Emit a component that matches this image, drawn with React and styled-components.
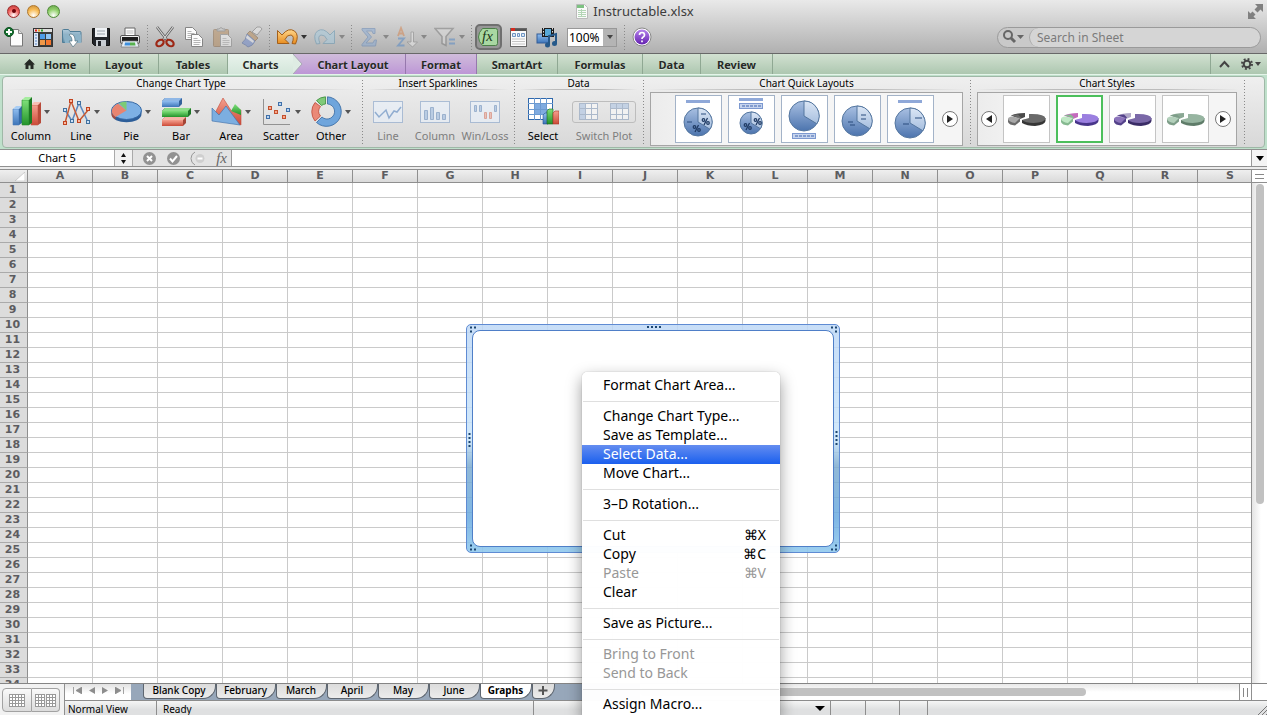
import React from 'react'
import styled, { createGlobalStyle, css } from 'styled-components'

const GlobalStyle = createGlobalStyle`
    * {
        box-sizing: border-box;
    }

    body {
        margin: 0;
        font-family: 'Noto Sans', 'Open Sans', sans-serif;
        font-size: 12px;
        color: #000;
        background: #fff;
    }

    button, input, select {
        font: inherit;
        color: inherit;
        margin: 0;
        padding: 0;
        border: 0;
        background: none;
    }

    svg {
        display: block;
        flex: none;
    }
`

const Window = styled.div`
    position: relative;
    display: flex;
    flex-direction: column;
    height: 100vh;
    overflow: hidden;
`

/* ---------- title bar and toolbar ---------- */

const Chrome = styled.header`
    flex: none;
    background: linear-gradient(#e9e9e9, #cfcfcf 45%, #b0b0b0);
    border-bottom: 1px solid #686868;
`

const TitleBar = styled.div`
    display: grid;
    grid-template-columns: 1fr auto 1fr;
    align-items: center;
    height: 22px;
    padding: 0 4px 0 7px;
`

const Lights = styled.div`
    display: flex;
    gap: 7px;
`

const Light = styled.button`
    width: 13px;
    height: 13px;
    border-radius: 50%;
    border: 1px solid ${p => p.$edge};
    background: radial-gradient(circle at 50% 85%, #fff 0, ${p => p.$color} 55%, ${p => p.$edge} 120%);
    display: flex;
    align-items: center;
    justify-content: center;

    i {
        width: 4px;
        height: 4px;
        border-radius: 50%;
        background: #6b0008;
    }
`

const Title = styled.h1`
    display: flex;
    align-items: center;
    gap: 5px;
    margin: 0;
    font-size: 13px;
    font-weight: 400;
    color: #3c3c3c;
`

const FullScreen = styled.button`
    justify-self: end;
`

const Toolbar = styled.div`
    display: flex;
    align-items: center;
    height: 31px;
    margin-left: -1px;
    padding: 0 6px 1px 0;
`

const ToolButton = styled.button`
    display: flex;
    align-items: center;
    justify-content: center;
    width: 29px;
    height: 26px;
    opacity: ${p => (p.$dim ? 0.5 : 1)};
`

const PressedTool = styled(ToolButton)`
    width: 27px;
    margin: 0 1px;
    border: 2px solid #6f6f6f;
    border-radius: 5px;
    background: #979797;
`

const ArrowButton = styled.button`
    width: 9px;
    height: 26px;
    color: ${p => (p.$dim ? '#888' : '#333')};
`

const Dotted = styled.span`
    flex: none;
    width: 6px;
    height: ${p => p.$h || 25}px;
    background: repeating-linear-gradient(#8a8a8a 0 1px, transparent 1px 3px) center / 1px 100% no-repeat;
`

const Zoom = styled.label`
    display: flex;
    align-items: center;
    width: 50px;
    height: 19px;
    margin: 0 4px 0 6px;
    border: 1px solid #989898;
    background: linear-gradient(to right, #fff 35px, #b4b4b4 35px);
    position: relative;

    select {
        appearance: none;
        width: 100%;
        padding-left: 1px;
        font-size: 12px;
        outline: none;
    }

    svg {
        position: absolute;
        right: 3px;
        top: 6px;
        color: #444;
        pointer-events: none;
    }
`

const Search = styled.div`
    display: flex;
    align-items: center;
    width: 264px;
    height: 21px;
    margin-left: auto;
    border: 1px solid #9a9a9a;
    border-radius: 11px;
    background: #c9c9c9;
    overflow: hidden;

    button {
        width: 31px;
        padding-left: 5px;
    }

    input {
        flex: 1;
        min-width: 0;
        height: 19px;
        padding-left: 7px;
        border-left: 1px solid #a9a9a9;
        border-radius: 10px;
        background: #d5d5d5;
        font-size: 12px;
        outline: none;
    }

    input::placeholder {
        color: #7b7b7b;
        opacity: 1;
    }
`

/* ---------- ribbon ---------- */

const Tabs = styled.nav`
    flex: none;
    display: flex;
    height: 20px;
    background: linear-gradient(#d2e1d1, #adc7b0);
`

const tabTone = {
    active: css`
        background: linear-gradient(#e9f3ec, #d3e6da);
        border-right: 0;
    `,
    purple: css`
        background: linear-gradient(#d0bcdb, #bd97d6);
        border-right-color: #9678ad;
    `,
}

const Tab = styled.button`
    position: relative;
    display: flex;
    align-items: center;
    justify-content: center;
    gap: 9px;
    flex: none;
    width: ${p => p.$w}px;
    padding-left: ${p => p.$pad || 0}px;
    border-right: 1px solid #8fa893;
    font-size: 11px;
    font-weight: 700;
    color: #262a26;
    text-shadow: 0 1px 0 rgba(255, 255, 255, 0.5);
    white-space: nowrap;
    ${p => tabTone[p.$tone]}
`

const TabPoint = styled.svg`
    position: absolute;
    left: 100%;
    top: 0;
    z-index: 1;
`

const TabTools = styled.div`
    display: flex;
    align-items: center;
    gap: 11px;
    width: 57px;
    margin-left: auto;
    padding-left: 8px;
    border-left: 1px solid #8fa893;
`

const Ribbon = styled.section`
    flex: none;
    height: 75px;
    padding: 1px 2px;
    background: #bfe0cb;
    border-top: 1px solid #e4f4e9;
`

const RibbonPanel = styled.div`
    display: flex;
    align-items: center;
    height: 72px;
    border: 1px solid #9fb8a7;
    border-radius: 4px;
    background: linear-gradient(#efefef, #d8d8d8);
`

const Group = styled.div`
    flex: none;
    display: flex;
    flex-direction: column;
    width: ${p => p.$w}px;
    height: 70px;
    padding: 0 3px;
`

const GroupTitle = styled.h2`
    margin: 0;
    height: 13px;
    font-size: 10px;
    line-height: 12px;
    font-weight: 400;
    text-align: center;
    border-bottom: 1px solid;
    border-image: linear-gradient(to right, transparent, #bbb 30%, #bbb 70%, transparent) 1;
`

const Items = styled.div`
    display: grid;
    grid-template-columns: ${p => p.$cols};
    flex: 1;
    align-items: end;
    padding: 0 0 4px;
`

const Item = styled.button`
    display: flex;
    flex-direction: column;
    align-items: center;
    font-size: 11px;
    line-height: 15px;
    white-space: nowrap;
    color: ${p => (p.$dim ? '#7e7e7e' : '#000')};

    span {
        display: flex;
        align-items: center;
        gap: 3px;
        height: 33px;
        color: #555;
    }
`

const SwitchFrame = styled.i`
    display: flex;
    width: 64px;
    height: 22px;
    border: 1px solid #bdbdbd;
    border-radius: 3px;
    align-items: center;
    justify-content: space-around;
`

const Gallery = styled.div`
    display: flex;
    align-items: center;
    gap: 6px;
    height: 54px;
    margin: 2px 1px 0;
    border: 1px solid #a5a5a5;
    background: linear-gradient(to right, #ececec, #f5f5f5 20%);
    padding: 0 4px 0 ${p => p.$start}px;
`

const Thumb = styled.button`
    width: 47px;
    height: 48px;
    border: ${p => (p.$selected ? '2px solid #4cbf5c' : `1px solid ${p.$edge}`)};
    background: #fff;
    display: flex;
    align-items: center;
    justify-content: center;
`

const Round = styled.button`
    width: 16px;
    height: 16px;
    border-radius: 50%;
    border: 1px solid #777;
    background: #fff;
    display: flex;
    align-items: center;
    justify-content: center;
    margin-left: ${p => p.$ml || 0}px;
`

/* ---------- formula bar ---------- */

const FormulaBar = styled.div`
    flex: none;
    display: flex;
    height: 18px;
    border-top: 1px solid #909090;
    border-bottom: 1px solid #909090;
    background: #e3e3e3;

    input {
        min-width: 0;
        background: #fff;
        outline: none;
    }
`

const NameBox = styled.input`
    width: 115px;
    font-size: 11px;
    line-height: 15px;
    padding-bottom: 1px;
    text-align: center;
    border-right: 1px solid #aaa;
`

const Stepper = styled.button`
    width: 18px;
    border-right: 1px solid #aaa;
    background: #f1f1f1;
    display: flex;
    align-items: center;
    justify-content: center;
`

const FormulaTools = styled.div`
    display: flex;
    align-items: center;
    justify-content: space-between;
    width: 99px;
    padding: 0 4px 0 10px;
    border-right: 1px solid #999;
`

const FxLabel = styled.button`
    font-family: 'Liberation Serif', serif;
    font-style: italic;
    font-size: 15px;
    line-height: 16px;
    color: #666;
`

const FormulaInput = styled.input`
    flex: 1;
`

const Expand = styled.button`
    width: 16px;
    border-left: 1px solid #999;
    background: #f4f4f4;
    display: flex;
    align-items: center;
    justify-content: center;
`

/* ---------- sheet ---------- */

const SheetArea = styled.main`
    flex: 1;
    min-height: 0;
    display: flex;
    border-top: 2px solid #ececec;
`

const SheetView = styled.div`
    flex: 1;
    min-width: 0;
    position: relative;
    overflow: hidden;
    border-right: 1px solid #909090;
`

const Grid = styled.table`
    table-layout: fixed;
    width: 1263px;
    border-collapse: separate;
    border-spacing: 0;

    th, td {
        padding: 0;
        height: 15px;
        width: 65px;
        border-right: 1px solid #cacaca;
        border-bottom: 1px solid #cacaca;
    }

    th {
        font-family: 'DejaVu Sans', sans-serif;
        font-size: 11px;
        line-height: 12px;
        font-weight: 700;
        color: #5c5c60;
        background: #dcdcdc;
        border-color: #8f8f8f;
    }

    th:first-child {
        width: 28px;
        padding-right: 2px;
    }

    tbody th {
        border-bottom-color: #aaa;
        line-height: 14px;
    }

    thead th {
        height: 14px;
        border-top: 1px solid #8f8f8f;
        background: linear-gradient(#efefef, #dadada);
    }
`

const CornerMark = styled.svg`
    margin-left: auto;
`

const VScroll = styled.div`
    width: 15px;
    background: linear-gradient(to right, #e4e4e4, #fff 60%);

    span {
        display: flex;
        align-items: center;
        justify-content: center;
        height: 14px;
        border-top: 1px solid #8f8f8f;
        border-bottom: 1px solid #8f8f8f;
        background: #fff;
    }

    i {
        display: block;
        width: 8px;
        height: 320px;
        margin: 1px 0 0 4px;
        border-radius: 4px;
        background: #c1c1c1;
    }
`

const ChartFrame = styled.div`
    position: absolute;
    left: 466px;
    top: 155px;
    width: 374px;
    height: 229px;
    padding: 5px;
    border: 1px solid #5f8bd3;
    border-radius: 5px;
    background: linear-gradient(
        rgba(190, 216, 246, 0.85),
        rgba(200, 228, 250, 0.85) 50%,
        rgba(125, 172, 208, 0.85) 62%,
        rgba(105, 170, 224, 0.85) 85%,
        rgba(146, 202, 238, 0.9)
    );
`

const ChartArea = styled.div`
    height: 100%;
    border: 1px solid #4f7fc8;
    border-radius: 8px;
    background: #fff;
`

const Handle = styled.svg`
    position: absolute;
    ${p => p.$place}
`

/* ---------- bottom bar ---------- */

const Bottom = styled.footer`
    flex: none;
    display: flex;
    height: 32px;
    border-top: 1px solid #858585;
    background: #f2f2f2;
`

const ViewSwitch = styled.div`
    display: flex;
    width: 65px;
    padding: 4px 4px 3px 2px;
    border-right: 1px solid #909090;

    button {
        flex: 1;
        display: flex;
        align-items: center;
        justify-content: center;
        border: 1px solid #a2a2a2;
        background: linear-gradient(#fafafa, #dcdcdc);
    }

    button:first-child {
        border-radius: 4px 0 0 4px;
    }

    button:last-child {
        border-radius: 0 4px 4px 0;
        border-left: 0;
    }
`

const BottomMain = styled.div`
    flex: 1;
    min-width: 0;
`

const TabStrip = styled.div`
    display: flex;
    height: 17px;
    border-bottom: 1px solid #8c8c8c;
`

const SheetTabs = styled.div`
    display: flex;
    align-items: flex-start;
    width: 575px;
    background: #97a7ba;
`

const SheetNav = styled.div`
    display: flex;
    align-items: center;
    justify-content: space-around;
    width: 66px;
    height: 16px;
    margin-right: 12px;
    padding: 0 4px 4px 4px;
    background: linear-gradient(#e2e2e2, #fff 60%);
`

const SheetTab = styled.button`
    width: ${p => p.$w}px;
    height: 15px;
    padding: 0 1px 2px 0;
    border: 1px solid #5e6670;
    border-top: 0;
    border-radius: 0 0 13px 4px;
    background: ${p => (p.$active ? '#fff' : 'linear-gradient(#dcdcdc, #ececec)')};
    font-size: 10px;
    line-height: 12px;
    font-weight: ${p => (p.$active ? 700 : 500)};
    white-space: nowrap;
`

const HScroll = styled.div`
    flex: 1;
    display: flex;
    align-items: center;
    background: linear-gradient(#e9e9e9, #fff 50%);

    i {
        width: 446px;
        height: 8px;
        border-radius: 4px;
        background: #c1c1c1;
    }

    span {
        display: flex;
        align-items: center;
        justify-content: center;
        width: 13px;
        height: 16px;
        margin-left: auto;
        border: 1px solid #909090;
        border-width: 0 1px;
        background: #fff;
    }
`

const StripEnd = styled.div`
    width: 15px;
    background: #fff;
`

const Status = styled.div`
    display: flex;
    height: 14px;
    background: linear-gradient(#f5f5f5, #dfe0e1 60%);
`

const StatusCell = styled.div`
    display: flex;
    align-items: center;
    justify-content: ${p => (p.$end ? 'flex-end' : 'flex-start')};
    width: ${p => p.$w}px;
    padding: 1px 5px 0 ${p => p.$pad || 3}px;
    border-right: 1px solid #8d8d8d;
    font-size: 10px;
    line-height: 14px;
    white-space: nowrap;
`

const Grip = styled.svg`
    margin-left: auto;
`

/* ---------- context menu ---------- */

const Menu = styled.div`
    position: absolute;
    left: 582px;
    top: 372px;
    z-index: 5;
    width: 198px;
    padding: 4px 0 5px;
    border-radius: 5px;
    background: rgba(255, 255, 255, 0.98);
    box-shadow: 0 0 1px rgba(0, 0, 0, 0.4), 0 6px 16px rgba(0, 0, 0, 0.4);
`

const MenuItem = styled.button`
    display: flex;
    justify-content: space-between;
    width: 100%;
    height: 19px;
    padding: 0 14px 0 21px;
    font-size: 14px;
    line-height: 17px;
    color: ${p => (p.$on ? '#fff' : p.$dim ? '#979797' : '#000')};
    background: ${p => (p.$on ? 'linear-gradient(#648df0, #1a5fee)' : 'none')};
`

const MenuLine = styled.hr`
    height: 1px;
    margin: 6px 1px 5px;
    border: 0;
    background: #dfdfdf;
`

/* ---------- drawings ---------- */

const Defs = () => (
    <svg width="0" height="0" style={{ position: 'absolute' }}>
        <defs>
            {[
                ['blue', '#8fbdf0', '#3c74b8'],
                ['green', '#7fe07a', '#23932b'],
                ['red', '#f5a08f', '#cc4a37'],
                ['steel', '#b0cbdc', '#5d8aa5'],
                ['orange', '#ffd68a', '#e88b1c'],
                ['pie', '#a9c0e2', '#4c74ae'],
                ['piel', '#dbe6f5', '#a7bfdf'],
                ['grey', '#fafafa', '#b9b9b9'],
                ['violet', '#b583ec', '#6420b0'],
            ].map(([id, a, b]) => (
                <linearGradient key={id} id={id} x1="0" y1="0" x2="0" y2="1">
                    <stop offset="0" stopColor={a} />
                    <stop offset="1" stopColor={b} />
                </linearGradient>
            ))}
        </defs>
    </svg>
)

const Svg = ({ w = 22, h = 22, children, ...rest }) => (
    <svg width={w} height={h} viewBox={`0 0 ${w} ${h}`} fill="none" aria-hidden="true" {...rest}>
        {children}
    </svg>
)

const Down = ({ w = 6, h = 4 }) => (
    <Svg w={w} h={h}><path d={`M0 0h${w}L${w / 2} ${h}z`} fill="currentColor" /></Svg>
)

const NewIcon = () => (
    <Svg>
        <path d="M7.500 3.500h8l4 4v12.500h-12z" fill="#fcfcfc" stroke="#777" />
        <path d="M15.500 3.500v4h4" fill="#ddd" stroke="#888" />
        <circle cx="6" cy="6" r="4.500" fill="#15702f" stroke="#0a4f1d" />
        <path d="M6 3v6M3 6h6" stroke="#fff" strokeWidth="2" />
    </Svg>
)

const GalleryIcon = () => (
    <Svg>
        <rect x="1.500" y="2.500" width="19" height="18" fill="#3c3c3c" stroke="#333" />
        <rect x="2" y="3" width="18" height="3" fill="#ddd" />
        <path d="M3 4.500h2" stroke="#e02020" strokeWidth="2" />
        <path d="M6 4.500h2" stroke="#e8a020" strokeWidth="2" />
        <path d="M9 4.500h2" stroke="#30a030" strokeWidth="2" />
        <rect x="2" y="7" width="4" height="13" fill="#dfe9f6" />
        <path d="M3 9h2M3 12h2M3 15h2M3 18h2" stroke="#5580c0" />
        <rect x="8" y="8" width="5" height="5" fill="#4d9be8" />
        <rect x="14" y="8" width="5" height="5" fill="#8fc4f5" />
        <rect x="8" y="14" width="5" height="5" fill="#f09848" />
        <rect x="14" y="14" width="5" height="5" fill="#f4762e" />
    </Svg>
)

const OpenIcon = () => (
    <Svg>
        <path d="M1.500 4.500q0-1 1-1h5l1.500 2h10q1 0 1 1v10h-18.500z" fill="url(#steel)" stroke="#4f7d97" />
        <path d="M2 8.500h18v8.500h-16z" fill="#8db3c8" />
        <path d="M9 8c4 0 5 3 5 7h3l-5 6-4-6h3c0-3-1-5-3-6z" fill="#fff" stroke="#51717f" strokeWidth=".7" />
    </Svg>
)

const SaveIcon = () => (
    <Svg>
        <path d="M2.500 2.500h17v17h-15l-2-2z" fill="#22252a" stroke="#111" />
        <rect x="5" y="2" width="12" height="9" fill="#eef1f4" />
        <path d="M7 5h8M7 8h8" stroke="#9aa3ad" />
        <rect x="6" y="14" width="10" height="6" fill="#c9ced4" />
        <rect x="8" y="15" width="3" height="5" fill="#22252a" />
    </Svg>
)

const PrintIcon = () => (
    <Svg>
        <path d="M6 10V2h10v8z" fill="#fff" stroke="#666" />
        <path d="M7.500 5h7M7.500 7h7" stroke="#bbb" />
        <rect x="1.500" y="9.500" width="19" height="8" rx="1.500" fill="url(#grey)" stroke="#555" />
        <rect x="3" y="11" width="16" height="4" fill="#1d1d1d" />
        <path d="M4 15h14l2 6H2z" fill="#e6eef5" stroke="#777" strokeWidth=".7" />
        <path d="M6 16.500h5v3H5.500z" fill="#3f8fdb" />
        <path d="M11 16.500h5l.5 3H11z" fill="#56b04e" />
    </Svg>
)

const CutIcon = () => (
    <Svg>
        <path d="M3 1l10 13M19 1L9 14" stroke="#5a5a5a" strokeWidth="2.600" />
        <path d="M3 1l10 13M19 1L9 14" stroke="#d9d9d9" strokeWidth="1.200" />
        <ellipse cx="6" cy="17" rx="4" ry="2.800" transform="rotate(-35 6 17)" stroke="#9d2715" strokeWidth="2.200" />
        <ellipse cx="16" cy="17" rx="4" ry="2.800" transform="rotate(35 16 17)" stroke="#9d2715" strokeWidth="2.200" />
    </Svg>
)

const Sheet = ({ x, y }) => (
    <g>
        <path d={`M${x} ${y}h7l4 4v8h-11z`} fill="#fbfbfb" stroke="#858585" />
        <path d={`M${x + 2} ${y + 4}h4M${x + 2} ${y + 6}h7M${x + 2} ${y + 8}h7M${x + 2} ${y + 10}h6`} stroke="#b5b5b5" />
    </g>
)

const CopyIcon = () => <Svg><Sheet x={2.5} y={1.5} /><Sheet x={8.5} y={8.5} /></Svg>

const PasteIcon = () => (
    <Svg>
        <rect x="1.500" y="3.500" width="15" height="17" rx="1" fill="#b78b5b" stroke="#8a6743" />
        <path d="M5 5V3h2q2-3 4 0h2v2z" fill="#ccc" stroke="#777" />
        <Sheet x={8.5} y={8.5} />
    </Svg>
)

const BrushIcon = () => (
    <Svg>
        <path d="M11 6l5-5q4-1 5 2l-5 6z" fill="#ececec" stroke="#777" />
        <path d="M9 5l8 7-3 3-8-7z" fill="#b98a55" stroke="#7f5d38" />
        <path d="M6 8l8 7q-2 5-7 6-2-2-6-4 4-3 5-9z" fill="#6c88cc" stroke="#4a63a0" />
        <path d="M6 9l7 6-1 2-7-5z" fill="#eceff6" />
    </Svg>
)

const UndoIcon = ({ fill, edge }) => (
    <Svg>
        <path d="M1.500 4.500v13h11.500l-4-4q2-5 6-4.500 4 1 1 8.500l3.500.5q4-9-1-13-6-4-12.500 4z" fill={fill} stroke={edge} strokeLinejoin="round" />
    </Svg>
)

const SumIcon = () => (
    <Svg>
        <path d="M4 2.500h13v5h-2l-1-2.500H8.500l5 6-5.500 6h7l1.500-3h2l-1 6H4v-1.500L10 11 4 4z" fill="#87aad6" stroke="#5f83b5" />
    </Svg>
)

const SortIcon = () => (
    <Svg>
        <path d="M2 10l3-8 3 8M3 7.500h4" stroke="#d3814a" strokeWidth="1.800" />
        <path d="M2 12.500h6l-6 7h6.500" stroke="#4f86c6" strokeWidth="1.800" />
        <path d="M15 6v10h-4l5.500 5 5-5h-4V6z" fill="#eee" stroke="#888" />
    </Svg>
)

const FilterIcon = () => (
    <Svg>
        <path d="M1 2.500h18l-7 8v9l-4-2v-7z" fill="#dcdcdc" stroke="#777" strokeWidth="1.500" />
        <path d="M15 13.500h6M15 17.500h6" stroke="#4f86c6" strokeWidth="2" />
    </Svg>
)

const FxIcon = () => (
    <Svg w={21} h={20}>
        <path d="M4.500 1.500h13q2 0 2 2v13q0 2-2 2h-13q-4-4-4-8.500t4-8.500z" fill="#a9d8a2" stroke="#4c7f49" />
        <text x="4" y="14" fontFamily="Liberation Serif" fontStyle="italic" fontSize="15" fill="#1c381a">fx</text>
    </Svg>
)

const ToolboxIcon = () => (
    <Svg>
        <rect x="3.500" y="2.500" width="16" height="18" fill="#fbfbfb" stroke="#666" />
        <rect x="4" y="3" width="15" height="2" fill="#555" />
        <rect x="4" y="2" width="4" height="3" fill="#d42a1e" />
        <path d="M5.500 7.500h3v3h-3zM10.500 7.500h2v3h-2zM14.500 7.500h3v3h-3z" fill="#dce8f5" stroke="#6d94c2" />
        <path d="M5 13h13M5 15.500h13M5 18h13" stroke="#c4c4c4" />
    </Svg>
)

const MediaIcon = () => (
    <Svg>
        <rect x="1" y="8" width="12" height="9" fill="url(#blue)" stroke="#335c98" />
        <rect x="6" y="2" width="12" height="9" fill="#1c1c1c" />
        <rect x="9" y="3" width="6" height="7" fill="#58a9d8" />
        <path d="M7.500 2v9M16.500 2v9" stroke="#ddd" strokeDasharray="1.500 1.500" />
        <path d="M13 19v-9l7-2v9" stroke="#26598a" strokeWidth="2" />
        <circle cx="11.500" cy="19" r="2.500" fill="#26598a" />
        <circle cx="18.500" cy="17.500" r="2.500" fill="#26598a" />
    </Svg>
)

const HelpIcon = () => (
    <Svg w={20} h={20}>
        <circle cx="10" cy="10" r="9" fill="#fff" stroke="#888" />
        <circle cx="10" cy="10" r="7.500" fill="url(#violet)" />
        <path d="M7.500 8q0-2.500 2.500-2.500T12.500 8q0 1.200-1.300 1.900T10 12M10 13.500v1.700" stroke="#fff" strokeWidth="1.700" />
    </Svg>
)

const HomeIcon = () => (
    <Svg w={11} h={10}><path d="M5.500 0L11 5.500H9.500V10h-3V6.500h-2V10h-3V5.500H0z" fill="#262a26" /></Svg>
)

const GearIcon = () => (
    <Svg w={20} h={12}>
        <circle cx="6" cy="6" r="3.300" stroke="#444" strokeWidth="2" />
        <circle cx="6" cy="6" r="5" stroke="#444" strokeWidth="2" strokeDasharray="1.900 2.027" />
        <path d="M14 4h6l-3 4z" fill="#444" />
    </Svg>
)

const ColumnIcon = () => (
    <Svg w={29} h={32}>
        <path d="M1 13h6v16H1z" fill="url(#blue)" stroke="#4a7cb8" strokeWidth=".6" />
        <path d="M1 13l3-3h6l-3 3z" fill="#a9cdf3" />
        <path d="M7 13l3-3v17l-3 2z" fill="#356aa8" />
        <path d="M19 9h7v20h-7z" fill="url(#red)" stroke="#c45a48" strokeWidth=".6" />
        <path d="M19 9l3-3h7l-3 3z" fill="#f9c0b4" />
        <path d="M26 9l3-3v21l-3 2z" fill="#b84a3a" />
        <path d="M10 4h7v25h-7z" fill="url(#green)" stroke="#2a8f31" strokeWidth=".6" />
        <path d="M10 4l3-3h7l-3 3z" fill="#a5ec9f" />
        <path d="M17 4l3-3v26l-3 2z" fill="#1c7a23" />
    </Svg>
)

const LineIcon = () => (
    <Svg w={29} h={28}>
        <path d="M3 12l7 11 7-18 9 19" stroke="#5b88c0" strokeWidth="1.500" />
        <path d="M3 25L9 3l8 20L27 11" stroke="#c65a35" strokeWidth="1.500" />
        {[[3, 12], [10, 23], [17, 5], [26, 24]].map(([x, y]) => <rect key={x} x={x - 1.5} y={y - 1.5} width="3" height="3" fill="#cde0f6" stroke="#41719f" />)}
        {[[3, 25], [9, 3], [17, 23], [26, 11]].map(([x, y]) => <rect key={x} x={x - 1.5} y={y - 1.5} width="3" height="3" fill="#f8b8a0" stroke="#c2431f" />)}
    </Svg>
)

const PieIcon = () => (
    <Svg w={31} h={22}>
        <path d="M.5 9v4c0 11 30 11 30 0V9z" fill="#2d5e99" />
        <path d="M.5 9v4q0 3 4 5.500V12z" fill="#b04a38" />
        <ellipse cx="15.500" cy="9.500" rx="15" ry="9" fill="#7db0e4" stroke="#3568a5" />
        <path d="M15.500 9.500L4.500 16Q-4 9 7 2.500z" fill="#e88470" />
        <path d="M15.500 9.500L8 2.200Q11 .5 15.500.5z" fill="#7ccb75" />
    </Svg>
)

const BarIcon = () => (
    <Svg w={29} h={28}>
        <path d="M0 3l3-3h17v6l-3 3H0z" fill="#35629b" /><path d="M0 3l3-3h17l-3 3z" fill="#8fb7e6" /><rect y="3" width="17" height="6" fill="url(#blue)" />
        <path d="M0 13l3-3h26v6l-3 3H0z" fill="#1f7527" /><path d="M0 13l3-3h26l-3 3z" fill="#8ddc88" /><rect y="13" width="26" height="6" fill="url(#green)" />
        <path d="M0 22l3-3h21v6l-3 3H0z" fill="#a44536" /><path d="M0 22l3-3h21l-3 3z" fill="#f5b5a8" /><rect y="22" width="21" height="6" fill="url(#red)" />
    </Svg>
)

const AreaIcon = () => (
    <Svg w={31} h={29}>
        <path d="M4 16L12 1l9 14 4-2 5 0v15z" fill="url(#red)" stroke="#c44c3b" strokeWidth=".6" />
        <path d="M20 14l4-7 3 3 3 3v5z" fill="url(#green)" />
        <path d="M1 11l7 7 7-9 14 19-28-4z" fill="#7caee0" stroke="#3a6ca6" strokeWidth=".6" />
    </Svg>
)

const ScatterIcon = () => (
    <Svg w={30} h={28}>
        <path d="M1.500 1v25.500H28" stroke="#929292" />
        {[[8, 10, 1], [18, 6], [26, 12], [14, 14, 1], [6, 19], [22, 19, 1]].map(([x, y, r]) => (
            <rect key={x} x={x - 1.5} y={y - 1.5} width="3" height="3" fill={r ? '#f6a98e' : '#b9d3f0'} stroke={r ? '#c4502e' : '#3f70aa'} />
        ))}
    </Svg>
)

// ring segments, drawn clockwise round the centre
const DonutIcon = () => (
    <Svg w={31} h={31}>
        <path d="M16.500.8A14.800 14.800 0 1 1 5.500 26.500L11 21A7.500 7.500 0 1 0 16.500 8z" fill="#6fa5dc" stroke="#33679f" strokeWidth=".8" />
        <path d="M4 25A14.800 14.800 0 0 1 4 6.500l5.500 4a7.500 7.500 0 0 0 0 9.500z" fill="#ea8977" stroke="#bd4a38" strokeWidth=".8" />
        <path d="M5.500 4.500A14.800 14.800 0 0 1 14.500.8V8a7.500 7.500 0 0 0-4 1.500z" fill="#80ca79" stroke="#3b8d3b" strokeWidth=".8" />
    </Svg>
)

const Spark = ({ kind }) => (
    <Svg w={30} h={22} opacity=".7">
        <rect x=".5" y=".5" width="29" height="21" fill="#e9f0f9" stroke="#93acce" />
        {kind === 'line' && <path d="M2 11l4 5 7-7 3 8 5-7 3 1 4-5" stroke="#6f97c9" strokeWidth="1.500" />}
        {kind === 'column' && <path d="M4.500 9.500h3v9h-3zM10.500 6.500h3v12h-3zM16.500 11.500h3v7h-3zM22.500 13.500h3v5h-3z" fill="#aac4e4" stroke="#7e9dc5" />}
        {kind === 'win' && (
            <>
                <path d="M4.500 4.500h2v6h-2zM9.500 4.500h2v6h-2zM24.500 4.500h2v6h-2z" fill="#aac4e4" stroke="#7e9dc5" />
                <path d="M14.500 11.500h2v6h-2zM19.500 11.500h2v6h-2z" fill="#ecb3a5" stroke="#d88b7b" />
            </>
        )}
    </Svg>
)

const SelectIcon = () => (
    <Svg w={31} h={28}>
        <rect x=".5" y=".5" width="24" height="21" fill="#fff" stroke="#2f68ac" />
        <rect x="7" y="6" width="12" height="10" fill="#7fabe0" />
        <path d="M6.500 0v22M12.500 0v22M18.500 0v22M0 5.500h25M0 11.500h25M0 16.500h25" stroke="#6c9ad0" />
        <path d="M15 17l2-2h3v11h-5z" fill="url(#blue)" stroke="#245390" strokeWidth=".6" />
        <path d="M19 13l2-2h4v15h-6z" fill="url(#green)" stroke="#17661d" strokeWidth=".6" />
        <path d="M25 15l2-2h4v13h-6z" fill="url(#red)" stroke="#a83426" strokeWidth=".6" />
    </Svg>
)

const SwitchIcon = ({ side }) => (
    <Svg w={19} h={17} opacity=".55">
        <rect x=".5" y=".5" width="18" height="16" fill="#fff" stroke="#7f97b8" />
        <path d={side ? 'M1 1h5v15H1z' : 'M1 1h17v5H1z'} fill="#a9c2e4" />
        <path d="M6.500 0v17M12.500 0v17M0 5.500h19M0 11.500h19" stroke="#7f97b8" />
    </Svg>
)

const Percent = ({ x, y }) => (
    <g stroke="#1f3a63" strokeWidth="1.200">
        <circle cx={x + 1.5} cy={y + 2} r="1.300" />
        <circle cx={x + 6} cy={y + 5} r="1.300" />
        <path d={`M${x + 5.500} ${y}l-3.500 7`} />
    </g>
)

// the captions round the pie come from the flags
const QuickLayout = ({ cy, r, title, legendTop, legendBottom, percents = [], dashes }) => (
    <Svg w={45} h={46}>
        {title && <rect x="10" y={legendTop ? 2 : 4} width="24" height="3" fill="#8fa8d8" />}
        {[legendTop && 8, legendBottom && 38].filter(Boolean).map(y => (
            <g key={y}>
                <rect x="10.500" y={y - 0.5} width="23" height="5" fill="#c6d4ee" stroke="#7c98cf" />
                <path d={`M13 ${y + 2}h19`} stroke="#3f64ad" strokeDasharray="3 1" />
            </g>
        ))}
        <circle cx="22" cy={cy} r={r} fill="url(#pie)" stroke="#54769f" />
        <path d={`M22 ${cy}V${cy - r}A${r} ${r} 0 0 1 ${22 + r * 0.86} ${cy + r * 0.52}z`} fill="url(#piel)" stroke="#54769f" />
        {percents.map(([x, y]) => <Percent key={x} x={x} y={y} />)}
        {dashes && <path d={dashes} stroke="#2a4c7e" strokeWidth="1.200" />}
    </Svg>
)

const MiniPie = ({ c }) => (
    <Svg w={38} h={13}>
        <path d="M3 2.500Q8 0 17 0v4l-5 2z" fill={c[2]} />
        <path d="M3 2.500q4-1 7-1l3 3-1 1q-4-2-9-3z" fill={c[1]} />
        <path d="M0 6v3q1 3 7 3.500l5-4V5z" fill={c[1]} />
        <path d="M0 6q0-2 4-2.500l8 1.500-5 5Q1 9 0 6z" fill={c[0]} />
        <path d="M14 7v3q5 3 13 3 10-1 10.500-5V5z" fill={c[4]} />
        <path d="M21 1q16-.5 16.500 4.500-1 4-12 4.500-8 0-11.500-3l7-2z" fill={c[3]} />
    </Svg>
)

/* ---------- data ---------- */

const columns = 'ABCDEFGHIJKLMNOPQRS'.split('')
const rows = Array.from({ length: 34 }, (_, i) => i + 1)

const tabs = [
    ['Home', 90, null, 11],
    ['Layout', 69],
    ['Tables', 69],
    ['Charts', 65, 'active'],
    ['Chart Layout', 113, 'purple', 8],
    ['Format', 71, 'purple'],
    ['SmartArt', 81],
    ['Formulas', 85],
    ['Data', 58],
    ['Review', 72],
]

const chartTypes = [
    ['Column', ColumnIcon],
    ['Line', LineIcon],
    ['Pie', PieIcon],
    ['Bar', BarIcon],
    ['Area', AreaIcon],
    ['Scatter', ScatterIcon],
    ['Other', DonutIcon],
]

const layouts = [
    { cy: 26, r: 14, title: true, percents: [[26, 22], [17, 29]], dashes: 'M11 26h5M25 18h5' },
    { cy: 27, r: 11, title: true, legendTop: true, percents: [[25, 22], [15, 27]] },
    { cy: 20, r: 15, legendBottom: true },
    { cy: 25, r: 15, dashes: 'M26 19h5M26 23h5M13 26h5M15 29h5' },
    { cy: 27, r: 15, title: true, dashes: 'M27 22h7M15 28h6' },
]

const chartStyles = [
    ['#a9a9a9', '#6a6a6a', '#4a4a4a', '#6a6a6a', '#363636'],
    ['#bfe8c5', '#86b990', '#c46bbd', '#9b7fe0', '#48358a'],
    ['#8c74bb', '#54428a', '#b0a8c8', '#7a68a8', '#3a2c66'],
    ['#b3d0bb', '#7d9d88', '#8aa894', '#97b5a1', '#5f7c69'],
]

const sheets = [
    ['Blank Copy', 73],
    ['February', 60],
    ['March', 51],
    ['April', 51],
    ['May', 51],
    ['June', 51],
    ['Graphs', 52],
]

const menu = [
    ['Format Chart Area...'],
    null,
    ['Change Chart Type...'],
    ['Save as Template...'],
    ['Select Data...', '', 'on'],
    ['Move Chart...'],
    null,
    ['3–D Rotation...'],
    null,
    ['Cut', '⌘X'],
    ['Copy', '⌘C'],
    ['Paste', '⌘V', 'dim'],
    ['Clear'],
    null,
    ['Save as Picture...'],
    null,
    ['Bring to Front', '', 'dim'],
    ['Send to Back', '', 'dim'],
    null,
    ['Assign Macro...'],
]

function Header() {
    return (
        <Chrome>
            <TitleBar>
                <Lights>
                    <Light aria-label="Close" $color="#f0605c" $edge="#9c2a2a"><i /></Light>
                    <Light aria-label="Minimize" $color="#f8bb55" $edge="#b0762a" />
                    <Light aria-label="Zoom window" $color="#92d06c" $edge="#4f8a38" />
                </Lights>
                <Title>
                    <Svg w={12} h={15}>
                        <path d="M.5.5h8l3 3v11H.5z" fill="#fafafa" stroke="#bbb" />
                        <rect x="1" y="1" width="7" height="3" fill="#7dc182" />
                        <path d="M2 6.500h8M2 8.500h8M2 10.500h8M2 12.500h8M5.500 5v8" stroke="#b4d6b6" />
                    </Svg>
                    Instructable.xlsx
                </Title>
                <FullScreen aria-label="Full screen">
                    <Svg w={15} h={15}>
                        <path d="M7 0h8v8l-2.500-2.500-3 3-3-3 3-3zM0 7l2.500 2.500 2-2 3 3-2 2L8 15H0z" fill="#808080" />
                    </Svg>
                </FullScreen>
            </TitleBar>
            <Toolbar>
                <ToolButton aria-label="New"><NewIcon /></ToolButton>
                <ToolButton aria-label="Template gallery"><GalleryIcon /></ToolButton>
                <ToolButton aria-label="Open"><OpenIcon /></ToolButton>
                <ToolButton aria-label="Save"><SaveIcon /></ToolButton>
                <ToolButton aria-label="Print"><PrintIcon /></ToolButton>
                <Dotted />
                <ToolButton aria-label="Cut"><CutIcon /></ToolButton>
                <ToolButton aria-label="Copy"><CopyIcon /></ToolButton>
                <ToolButton aria-label="Paste" $dim><PasteIcon /></ToolButton>
                <ToolButton aria-label="Format painter" $dim><BrushIcon /></ToolButton>
                <Dotted />
                <ToolButton aria-label="Undo"><UndoIcon fill="url(#orange)" edge="#a4601a" /></ToolButton>
                <ArrowButton aria-label="Undo list"><Down /></ArrowButton>
                <ToolButton aria-label="Redo" $dim>
                    <svg width="22" height="22" viewBox="-22 0 22 22"><g transform="scale(-1 1)"><UndoIcon fill="#a5cbe0" edge="#5f94b2" /></g></svg>
                </ToolButton>
                <ArrowButton aria-label="Redo list" $dim><Down /></ArrowButton>
                <Dotted />
                <ToolButton aria-label="Sum" $dim><SumIcon /></ToolButton>
                <ArrowButton aria-label="Sum list" $dim><Down /></ArrowButton>
                <ToolButton aria-label="Sort" $dim><SortIcon /></ToolButton>
                <ArrowButton aria-label="Sort list" $dim><Down /></ArrowButton>
                <ToolButton aria-label="Filter" $dim><FilterIcon /></ToolButton>
                <ArrowButton aria-label="Filter list" $dim><Down /></ArrowButton>
                <Dotted />
                <PressedTool aria-label="Formula builder"><FxIcon /></PressedTool>
                <ToolButton aria-label="Toolbox"><ToolboxIcon /></ToolButton>
                <ToolButton aria-label="Media"><MediaIcon /></ToolButton>
                <Zoom>
                    <select aria-label="Zoom"><option>100%</option></select>
                    <Down />
                </Zoom>
                <Dotted />
                <ToolButton aria-label="Help"><HelpIcon /></ToolButton>
                <Search>
                    <button aria-label="Search options">
                        <Svg w={21} h={14}>
                            <circle cx="5" cy="5" r="4" stroke="#666" strokeWidth="2" />
                            <path d="M8 8l4 4" stroke="#666" strokeWidth="3" />
                            <path d="M14 5h7l-3.500 4z" fill="#666" />
                        </Svg>
                    </button>
                    <input aria-label="Search in Sheet" placeholder="Search in Sheet" />
                </Search>
            </Toolbar>
        </Chrome>
    )
}

function RibbonTabs() {
    return (
        <Tabs>
            {tabs.map(([name, w, tone, pad]) => (
                <Tab key={name} $w={w} $tone={tone} $pad={pad}>
                    {name === 'Home' && <HomeIcon />}
                    {name}
                    {tone === 'active' && (
                        <TabPoint width="10" height="20" viewBox="0 0 10 20">
                            <path d="M0 0l9 10-9 10z" fill="#deece3" />
                            <path d="M0 0l9 10-9 10" fill="none" stroke="#a9a9b4" />
                        </TabPoint>
                    )}
                </Tab>
            ))}
            <TabTools>
                <button aria-label="Collapse ribbon">
                    <Svg w={11} h={8}><path d="M1 7l4.500-5L10 7" stroke="#444" strokeWidth="2" /></Svg>
                </button>
                <button aria-label="Ribbon settings"><GearIcon /></button>
            </TabTools>
        </Tabs>
    )
}

function RibbonBody() {
    return (
        <Ribbon>
            <RibbonPanel>
                <Group $w={356}>
                    <GroupTitle>Change Chart Type</GroupTitle>
                    <Items $cols="repeat(7, 1fr)">
                        {chartTypes.map(([name, Icon]) => (
                            <Item key={name}>
                                <span><Icon /><Down /></span>
                                {name}
                            </Item>
                        ))}
                    </Items>
                </Group>
                <Dotted $h={64} />
                <Group $w={146}>
                    <GroupTitle>Insert Sparklines</GroupTitle>
                    <Items $cols="40px 54px 46px">
                        <Item $dim><span><Spark kind="line" /></span>Line</Item>
                        <Item $dim><span><Spark kind="column" /></span>Column</Item>
                        <Item $dim><span><Spark kind="win" /></span>Win/Loss</Item>
                    </Items>
                </Group>
                <Dotted $h={64} />
                <Group $w={123}>
                    <GroupTitle>Data</GroupTitle>
                    <Items $cols="46px 76px">
                        <Item><span><SelectIcon /></span>Select</Item>
                        <Item $dim>
                            <span><SwitchFrame><SwitchIcon side /><SwitchIcon /></SwitchFrame></span>
                            Switch Plot
                        </Item>
                    </Items>
                </Group>
                <Dotted $h={64} />
                <Group $w={321}>
                    <GroupTitle>Chart Quick Layouts</GroupTitle>
                    <Gallery $start={24}>
                        {layouts.map((l, i) => (
                            <Thumb key={i} $edge="#a3b3c8" aria-label={`Layout ${i + 1}`}><QuickLayout {...l} /></Thumb>
                        ))}
                        <Round $ml={2} aria-label="More layouts"><Svg w={6} h={8}><path d="M0 0l6 4-6 4z" fill="#222" /></Svg></Round>
                    </Gallery>
                </Group>
                <Dotted $h={64} />
                <Group $w={268}>
                    <GroupTitle>Chart Styles</GroupTitle>
                    <Gallery $start={3}>
                        <Round aria-label="Previous styles"><Svg w={6} h={8}><path d="M6 0L0 4l6 4z" fill="#222" /></Svg></Round>
                        {chartStyles.map((c, i) => (
                            <Thumb key={i} $edge="#c4c4c4" $selected={i === 1} aria-label={`Style ${i + 1}`}><MiniPie c={c} /></Thumb>
                        ))}
                        <Round aria-label="More styles"><Svg w={6} h={8}><path d="M0 0l6 4-6 4z" fill="#222" /></Svg></Round>
                    </Gallery>
                </Group>
                <Dotted $h={64} />
            </RibbonPanel>
        </Ribbon>
    )
}

function Formula() {
    return (
        <FormulaBar>
            <NameBox aria-label="Name box" defaultValue="Chart 5" />
            <Stepper aria-label="Names"><Svg w={5} h={11}><path d="M0 4h5L2.500 0zM0 7h5l-2.500 4z" fill="#111" /></Svg></Stepper>
            <FormulaTools>
                <button aria-label="Cancel">
                    <Svg w={13} h={13}><circle cx="6.500" cy="6.500" r="6.500" fill="#929292" /><path d="M4 4l5 5M9 4l-5 5" stroke="#fff" strokeWidth="2" /></Svg>
                </button>
                <button aria-label="Enter">
                    <Svg w={13} h={13}><circle cx="6.500" cy="6.500" r="6.500" fill="#929292" /><path d="M3 6.500l2.500 3L10 4" stroke="#fff" strokeWidth="2" /></Svg>
                </button>
                <Svg w={15} h={15}><path d="M5 1Q1 3 1 7.500T5 14" stroke="#999" /><circle cx="10" cy="7.500" r="4.500" fill="#cfcfcf" /><path d="M7.500 7.500h5" stroke="#fff" strokeWidth="2" /></Svg>
                <FxLabel>fx</FxLabel>
            </FormulaTools>
            <FormulaInput aria-label="Formula" />
            <Expand aria-label="Expand formula bar"><Down w={8} h={5} /></Expand>
        </FormulaBar>
    )
}

function Sheets() {
    return (
        <SheetArea>
            <SheetView>
                <Grid>
                    <thead>
                        <tr>
                            <th aria-label="Select all"><CornerMark width="10" height="9"><path d="M10 0v9H0z" fill="#fff" stroke="#aaa" strokeWidth=".5" /></CornerMark></th>
                            {columns.map(c => <th key={c} scope="col">{c}</th>)}
                        </tr>
                    </thead>
                    <tbody>
                        {rows.map(r => (
                            <tr key={r}>
                                <th scope="row">{r}</th>
                                {columns.map(c => <td key={c} />)}
                            </tr>
                        ))}
                    </tbody>
                </Grid>
                <ChartFrame>
                    <ChartArea />
                    {['left: 2px; top: 1px;', 'right: 1px; top: 1px; transform: scaleX(-1);', 'left: 2px; bottom: 1px; transform: scaleY(-1);', 'right: 1px; bottom: 1px; transform: scale(-1);'].map(place => (
                        <Handle key={place} $place={place} width="7" height="7">
                            <path d="M1 1.500h2M5 1.500h2M1 5.500h2" stroke="#1c4670" strokeWidth="2" />
                        </Handle>
                    ))}
                    <Handle $place="left: 180px; top: 0;" width="15" height="4"><path d="M0 2h15" stroke="#1c4670" strokeWidth="2" strokeDasharray="2 2" /></Handle>
                    <Handle $place="left: 1px; top: 108px;" width="3" height="15"><path d="M1.500 0v15" stroke="#1c4670" strokeWidth="2" strokeDasharray="2 2" /></Handle>
                    <Handle $place="right: 1px; top: 106px;" width="3" height="15"><path d="M1.500 0v15" stroke="#1c4670" strokeWidth="2" strokeDasharray="2 2" /></Handle>
                </ChartFrame>
            </SheetView>
            <VScroll>
                <span><Svg w={9} h={5}><path d="M0 .5h9M0 4.500h9" stroke="#888" /></Svg></span>
                <i />
            </VScroll>
        </SheetArea>
    )
}

function BottomBar() {
    return (
        <Bottom>
            <ViewSwitch>
                <button aria-label="Normal view">
                    <Svg w={16} h={13}><rect width="16" height="13" fill="#999" /><path d="M1 2h15M1 5h15M1 8h15M1 11h15" stroke="#fff" strokeWidth="2" strokeDasharray="2 1" /></Svg>
                </button>
                <button aria-label="Page layout view">
                    <Svg w={21} h={13}><path d="M0 0h10v13H0zM11 0h10v13H11z" fill="#999" /><path d="M1 2h9M1 5h9M1 8h9M1 11h9M12 2h9M12 5h9M12 8h9M12 11h9" stroke="#fff" strokeWidth="2" strokeDasharray="2 1" /></Svg>
                </button>
            </ViewSwitch>
            <BottomMain>
                <TabStrip>
                    <SheetTabs>
                        <SheetNav>
                            <button aria-label="First sheet"><Svg w={9} h={7}><path d="M.5 0v7M9 0v7L3 3.500z" stroke="#8d8d8d" strokeWidth=".8" fill="#8d8d8d" /></Svg></button>
                            <button aria-label="Previous sheet"><Svg w={6} h={7}><path d="M6 0v7L0 3.500z" fill="#8d8d8d" /></Svg></button>
                            <button aria-label="Next sheet"><Svg w={6} h={7}><path d="M0 0v7l6-3.500z" fill="#8d8d8d" /></Svg></button>
                            <button aria-label="Last sheet"><Svg w={9} h={7}><path d="M8.500 0v7M0 0v7l6-3.500z" stroke="#8d8d8d" strokeWidth=".8" fill="#8d8d8d" /></Svg></button>
                        </SheetNav>
                        {sheets.map(([name, w]) => <SheetTab key={name} $w={w} $active={name === 'Graphs'}>{name}</SheetTab>)}
                        <SheetTab $w={23} aria-label="Add sheet">
                            <Svg w={19} h={9}><path d="M10 0v9M5.500 4.500h9" stroke="#555" strokeWidth="2" /></Svg>
                        </SheetTab>
                    </SheetTabs>
                    <HScroll><i /><span><Svg w={5} h={9}><path d="M.5 0v9M4.500 0v9" stroke="#888" /></Svg></span></HScroll>
                    <StripEnd />
                </TabStrip>
                <Status>
                    <StatusCell $w={92}>Normal View</StatusCell>
                    <StatusCell $w={377} $pad={6}>Ready</StatusCell>
                    <StatusCell $w={297} $end><Down w={10} h={5} /></StatusCell>
                    <StatusCell $w={35} />
                    <StatusCell $w={34} />
                    <StatusCell $w={28} />
                    <Grip width="10" height="14"><path d="M1 14l9-9M5 14l5-5M9 14l1-1" stroke="#777" /></Grip>
                </Status>
            </BottomMain>
        </Bottom>
    )
}

function App() {
    return (
        <>
            <GlobalStyle />
            <Defs />
            <Window>
                <Header />
                <RibbonTabs />
                <RibbonBody />
                <Formula />
                <Sheets />
                <BottomBar />
                <Menu>
                    {menu.map((m, i) =>
                        m ? (
                            <MenuItem key={i} $on={m[2] === 'on'} $dim={m[2] === 'dim'}>
                                <span>{m[0]}</span>
                                {m[1] && <span>{m[1]}</span>}
                            </MenuItem>
                        ) : (
                            <MenuLine key={i} />
                        )
                    )}
                </Menu>
            </Window>
        </>
    )
}

export default App
